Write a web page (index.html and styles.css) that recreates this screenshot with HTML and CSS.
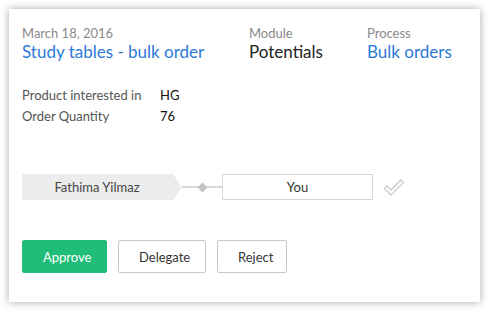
FILE: index.html
```html
<!DOCTYPE html>
<html>
<head>
    <title>Approval</title>
    <link rel="stylesheet" href="styles.css">
</head>
<body>
    <div class="card">
        <div class="summary">
            <div class="col col-main">
                <div class="caption">March 18, 2016</div>
                <a href="#" class="value link">Study tables - bulk order</a>
            </div>
            <div class="col col-module">
                <div class="caption">Module</div>
                <div class="value">Potentials</div>
            </div>
            <div class="col">
                <div class="caption">Process</div>
                <a href="#" class="value link">Bulk orders</a>
            </div>
        </div>

        <!-- record fields -->
        <div class="fields">
            <div class="field">
                <span class="field-label">Product interested in</span>
                <span class="field-value">HG</span>
            </div>
            <div class="field">
                <span class="field-label">Order Quantity</span>
                <span class="field-value">76</span>
            </div>
        </div>

        <!-- approval flow -->
        <div class="flow">
            <div class="stage done">Fathima Yilmaz</div>
            <div class="connector"><span class="diamond"></span></div>
            <div class="stage current">You</div>
            <svg class="check" width="22" height="20" viewBox="0 0 22 20">
                <path d="M1.5 11.5 L4 9 L8 13 L18 3 L20.5 5.5 L8 18 Z" fill="none" stroke="#c8c8c8" stroke-width="1.1" stroke-linejoin="round"/>
            </svg>
        </div>

        <div class="actions">
            <button class="btn btn-approve">Approve</button>
            <button class="btn">Delegate</button>
            <button class="btn">Reject</button>
        </div>
    </div>
</body>
</html>
```

FILE: styles.css
```css
body {
    font-family: Lato, "Open Sans", sans-serif;
    background-color: #fff;
    margin: 0;
    padding: 9px 10px 9px 9px;
}
.card {
    background: #fff;
    box-shadow: 0 0 8px rgba(0, 0, 0, 0.35);
    padding: 16px 13px 28px 13px;
    height: 293px;
    box-sizing: border-box;
}
.summary {
    display: grid;
    grid-template-columns: 227px 118px 1fr;
}
.caption {
    font-size: 13px;
    color: #8a8a8a;
    line-height: 16px;
}
.value {
    display: block;
    font-size: 17px;
    line-height: 22px;
    color: #222;
    text-decoration: none;
}
.link {
    color: #2b7ad8;
}
.fields {
    margin-top: 22px;
}
.field {
    display: flex;
    font-size: 13px;
    line-height: 21px;
}
.field-label {
    width: 138px;
    color: #555;
}
.field-value {
    color: #111;
}
.flow {
    display: flex;
    align-items: center;
    margin-top: 47px;
}
.stage {
    height: 26px;
    box-sizing: border-box;
    display: flex;
    align-items: center;
    justify-content: center;
    font-size: 13px;
    color: #444;
}
.stage.done {
    width: 160px;
    background: #ececec;
    clip-path: polygon(0 0, 151px 0, 100% 50%, 151px 100%, 0 100%);
    padding-right: 10px;
}
.stage.current {
    width: 151px;
    border: 1px solid #d6d6d6;
    color: #333;
}
.connector {
    width: 40px;
    height: 2px;
    background: #d8d8d8;
    display: flex;
    align-items: center;
    justify-content: center;
}
.diamond {
    width: 7px;
    height: 7px;
    background: #c4c4c4;
    transform: rotate(45deg);
}
.check {
    margin-left: 10px;
}
.actions {
    display: flex;
    gap: 11px;
    margin-top: 40px;
}
.btn {
    font-family: inherit;
    font-size: 13px;
    height: 33px;
    padding: 0 20px;
    background: #fff;
    border: 1px solid #c8c8c8;
    border-radius: 2px;
    color: #333;
    cursor: pointer;
}
.btn-approve {
    background-color: #1fbd77;
    border-color: #1fbd77;
    color: #fff;
    width: 85px;
}
.btn:nth-child(2) {
    width: 88px;
}
.btn:nth-child(3) {
    width: 70px;
}
```
